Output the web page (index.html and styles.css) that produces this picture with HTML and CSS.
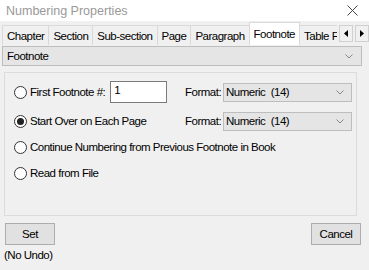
FILE: index.html
```html
<!DOCTYPE html>
<html lang="en">
<head>
  <meta charset="UTF-8">
  <title>Numbering Properties</title>
  <link rel="stylesheet" href="styles.css">
</head>
<body>

<div class="titlebar">
  <span class="title">Numbering Properties</span>
  <svg class="close" width="11" height="11" viewBox="0 0 11 11">
    <path d="M0.5 0.5 L10.5 10.5 M10.5 0.5 L0.5 10.5" stroke="#444" stroke-width="1" fill="none"/>
  </svg>
</div>

<div class="tabbar">
  <div class="tabs">
    <div class="tab">Chapter</div>
    <div class="tab">Section</div>
    <div class="tab">Sub-section</div>
    <div class="tab">Page</div>
    <div class="tab">Paragraph</div>
    <div class="tab active">Footnote</div>
    <div class="tab">Table Footnote</div>
  </div>
  <div class="scroll-btn">
    <svg width="4" height="7" viewBox="0 0 4 7"><path d="M4 0 L0 3.5 L4 7 Z" fill="#000"/></svg>
  </div>
  <div class="scroll-btn">
    <svg width="4" height="7" viewBox="0 0 4 7"><path d="M0 0 L4 3.5 L0 7 Z" fill="#000"/></svg>
  </div>
</div>

<div class="combo main-combo">
  <span>Footnote</span>
  <svg class="chev" width="8" height="5" viewBox="0 0 8 5"><path d="M0.5 0.5 L4 4 L7.5 0.5" stroke="#888" fill="none"/></svg>
</div>

<div class="group">
  <div class="row first">
    <span class="radio"></span>
    <span class="label">First Footnote #:</span>
    <span class="textbox">1</span>
    <div class="format">
      <span>Format:</span>
      <div class="combo small">
        <span>Numeric&nbsp; (14)</span>
        <svg class="chev" width="8" height="5" viewBox="0 0 8 5"><path d="M0.5 0.5 L4 4 L7.5 0.5" stroke="#888" fill="none"/></svg>
      </div>
    </div>
  </div>
  <div class="row">
    <span class="radio checked"></span>
    <span class="label">Start Over on Each Page</span>
    <div class="format">
      <span>Format:</span>
      <div class="combo small">
        <span>Numeric&nbsp; (14)</span>
        <svg class="chev" width="8" height="5" viewBox="0 0 8 5"><path d="M0.5 0.5 L4 4 L7.5 0.5" stroke="#888" fill="none"/></svg>
      </div>
    </div>
  </div>
  <div class="row">
    <span class="radio"></span>
    <span class="label">Continue Numbering from Previous Footnote in Book</span>
  </div>
  <div class="row">
    <span class="radio"></span>
    <span class="label">Read from File</span>
  </div>
</div>

<div class="actions">
  <div class="set-col">
    <button class="btn">Set</button>
    <div class="note">(No Undo)</div>
  </div>
  <button class="btn">Cancel</button>
</div>

</body>
</html>
```

FILE: styles.css
```css
body {
  margin: 0;
  width: 369px;
  height: 270px;
  background: #f0f0f0;
  font-family: "Liberation Sans", Arial, sans-serif;
  font-size: 11.5px;
  letter-spacing: -0.5px;
  color: #000;
  overflow: hidden;
}
.titlebar {
  height: 21px;
  background: #fff;
  display: flex;
  align-items: center;
  justify-content: space-between;
  padding: 0 11px 0 6px;
}
.title {
  font-size: 12.5px;
  letter-spacing: 0;
  color: #999;
}
.tabbar {
  display: flex;
  align-items: flex-end;
  height: 23px;
  margin-top: 1px;
  padding-left: 2px;
}
.tabs {
  display: flex;
  align-items: flex-end;
  width: 337px;
  overflow: hidden;
}
.tab {
  height: 19px;
  padding: 0 4px;
  display: flex;
  align-items: center;
  white-space: nowrap;
  border: 1px solid #d9d9d9;
  border-bottom: none;
  margin-right: -1px;
  background: #f0f0f0;
}
.tab.active {
  height: 22px;
  background: #fff;
  position: relative;
  z-index: 1;
}
.scroll-btn {
  width: 12px;
  height: 15px;
  margin-left: 2px;
  margin-bottom: 3px;
  border: 1px solid #d0d0d0;
  background: #f0f0f0;
  display: flex;
  align-items: center;
  justify-content: center;
}
.combo {
  display: flex;
  align-items: center;
  justify-content: space-between;
  background: #e5e5e5;
  border: 1px solid #bdbdbd;
  box-sizing: border-box;
}
.main-combo {
  height: 20px;
  margin: 1px 7px 0 2px;
  padding: 0 8px 0 4px;
}
.group {
  height: 144px;
  margin: 6px 12px 0 4px;
  border: 1px solid #dcdcdc;
  box-sizing: border-box;
  padding: 8px 4px 0 9px;
}
.row {
  display: flex;
  align-items: center;
  height: 22px;
  margin-top: 4px;
}
.row.first {
  margin-top: 0;
  margin-bottom: 7px;
}
.radio {
  width: 13px;
  height: 13px;
  box-sizing: border-box;
  border: 1px solid #333;
  border-radius: 50%;
  background: #fff;
  margin-right: 3px;
  display: flex;
  align-items: center;
  justify-content: center;
  flex: none;
}
.radio.checked::after {
  content: "";
  width: 7px;
  height: 7px;
  border-radius: 50%;
  background: #222;
}
.label {
  white-space: nowrap;
}
.textbox {
  width: 57px;
  height: 22px;
  box-sizing: border-box;
  border: 1px solid #7a7a7a;
  background: #fff;
  margin-left: 5px;
  padding: 2px 3px;
  align-self: flex-start;
}
.format {
  margin-left: auto;
  width: 167px;
  display: flex;
  align-items: center;
}
.combo.small {
  width: 129px;
  height: 19px;
  margin-left: auto;
  padding: 0 7px 0 2px;
}
.actions {
  display: flex;
  justify-content: space-between;
  align-items: flex-start;
  padding: 7px 8px 0 4px;
}
.set-col {
  display: flex;
  flex-direction: column;
}
.btn {
  width: 50px;
  height: 22px;
  margin-left: 1px;
  background: #e1e1e1;
  border: 1px solid #adadad;
  font-family: inherit;
  font-size: inherit;
  letter-spacing: inherit;
  color: #000;
  padding: 0;
}
.note {
  margin-top: 4px;
}
```
